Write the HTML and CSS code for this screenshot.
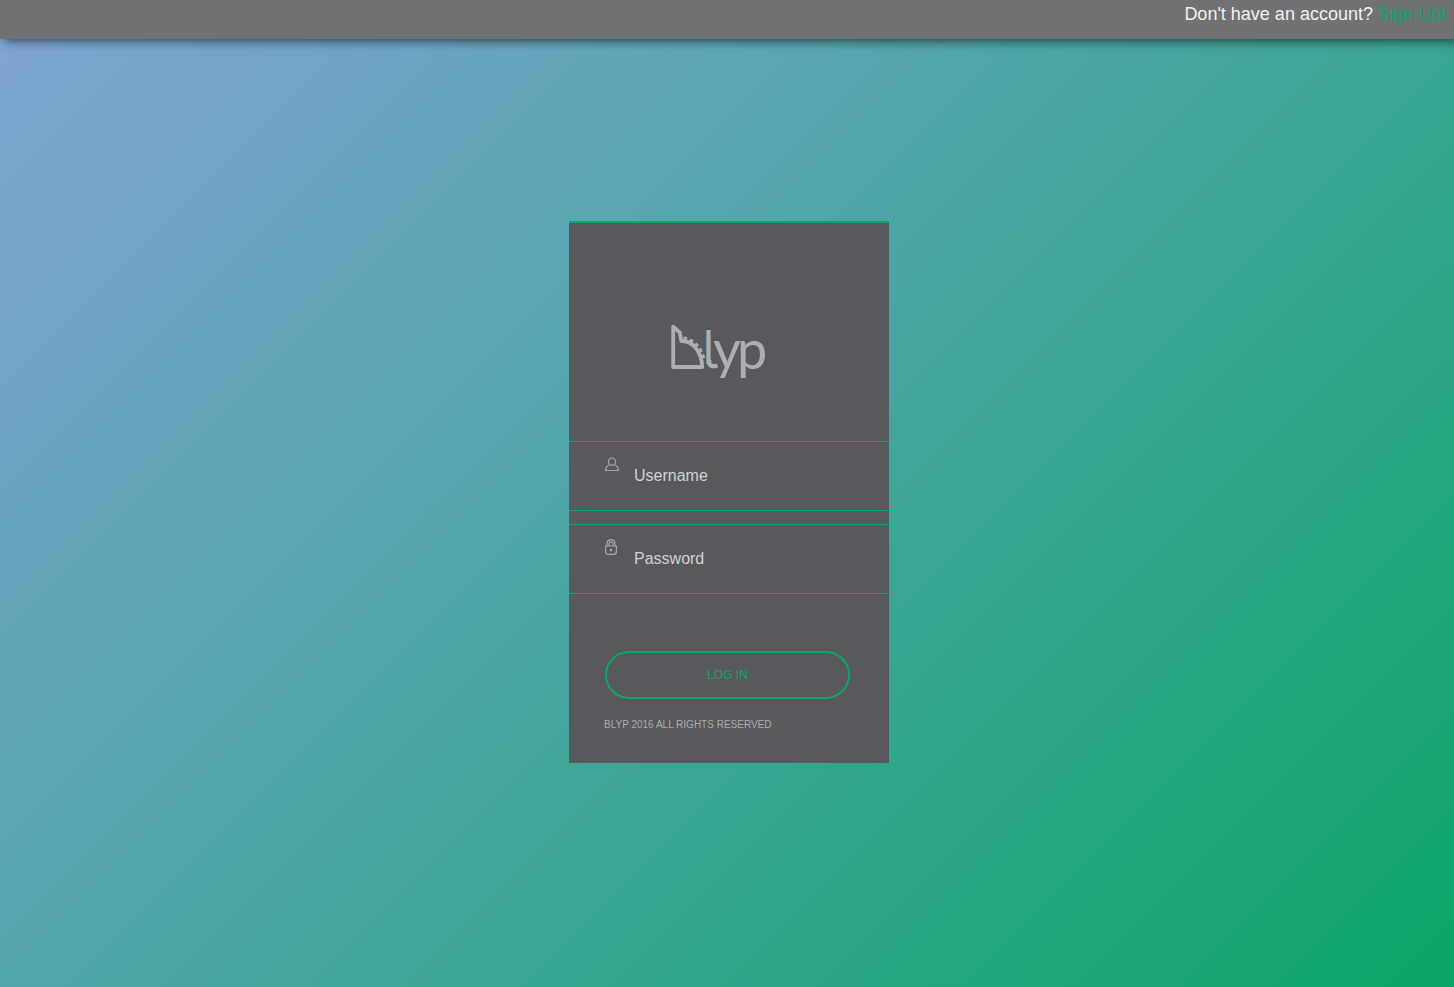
FILE: index.html
```
<!DOCTYPE html>
<html lang="en">
<head>
<meta charset="utf-8">
<title>Blyp</title>
<link rel="stylesheet" href="styles.css">
</head>
<body>
<header class="topbar">Don't have an account? <a class="signup" href="#">Sign Up!</a></header>
<main class="stage">
  <form class="card">
    <svg class="logo" viewBox="0 -10 110 80" role="img" aria-label="blyp">
      <path class="logo-line" d="M5.2 4.8V45H34.2C34 31 25.5 18.5 13.3 19L11.8 10.5Z"/>
      <path class="logo-scales" d="M15.6 15.8C26 18 34.5 27 36 38.5"/>
      <text class="logo-text"><tspan class="logo-l" x="35" y="42">l</tspan><tspan x="45" y="47">y</tspan><tspan x="69" y="47">p</tspan></text>
      <path class="logo-tail" d="M41.2 38V40C41.2 43.8 44.2 45.2 49.4 43.4"/>
    </svg>
    <div class="field">
      <svg class="icon" viewBox="0 0 14 16" aria-hidden="true"><circle cx="7" cy="5.6" r="3.6"/><path d="M4.7 8.7C2 9.6.7 11.5.6 14.5H13.4C13.3 11.5 12 9.6 9.3 8.7"/></svg>
      <input class="input" type="text" placeholder="Username" aria-label="Username">
    </div>
    <div class="field">
      <svg class="icon" viewBox="0 0 14 16" aria-hidden="true"><path d="M2 7V5C2 2.2 3.6.6 6 .6S10 2.2 10 5V7M4 7V5C4 3.4 4.8 2.6 6 2.6S8 3.4 8 5V7M.6 7H11.4V12.5Q11.4 15.4 8.5 15.4H3.5Q.6 15.4.6 12.5Z"/><path class="keyhole" d="M6 9.8V12.2"/></svg>
      <input class="input" type="password" placeholder="Password" aria-label="Password">
    </div>
    <button class="login" type="button">LOG IN</button>
    <p class="legal">BLYP 2016 ALL RIGHTS RESERVED</p>
  </form>
</main>
</body>
</html>
```
FILE: styles.css
```
* { box-sizing: border-box; }
body {
  margin: 0;
  min-height: 100vh;
  display: flex;
  flex-direction: column;
  font-family: "Liberation Sans", Arial, sans-serif;
  background: linear-gradient(135deg, #82a5d6, #0ca668);
}
.topbar {
  min-height: 39px;
  padding: 4px 7px;
  background: #717274;
  box-shadow: 4px 2px 10px rgba(0, 0, 0, .6);
  color: #f1f1f2;
  font-size: 18px;
  line-height: 20px;
  text-align: right;
}
.signup { color: #0ca668; text-decoration: none; }
.stage {
  display: flex;
  justify-content: center;
  padding: 182px 0 40px 4px;
}
.card {
  display: flex;
  flex-direction: column;
  width: 320px;
  padding-bottom: 32px;
  border-top: 2px solid #0ca668;
  background: #58595c;
}
.logo {
  width: 110px;
  height: 80px;
  margin: 89px 0 49px 99px;
  overflow: visible;
}
.logo-line { fill: none; stroke: #acaeaf; stroke-width: 3.8; stroke-linejoin: round; }
.logo-scales { fill: none; stroke: #acaeaf; stroke-width: 3.2; stroke-dasharray: 3.6 3; }
.logo-text { fill: #acaeaf; font-family: Lato, sans-serif; font-size: 54px; }
.logo-l { font-size: 46px; }
.logo-tail { fill: none; stroke: #acaeaf; stroke-width: 4.2; }
.field {
  display: flex;
  gap: 15px;
  height: 70px;
  padding: 14px 36px;
  border: solid #0ca668;
  border-width: 1px 0;
}
.field + .field { margin-top: 13px; }
.icon { width: 14px; height: 16px; fill: none; stroke: #a8a9ac; stroke-width: 1.2; }
.keyhole { stroke-width: 2; }
.input {
  flex: 1;
  min-width: 0;
  padding: 0;
  border: 0;
  outline: 0;
  background: none;
  color: #d1d2d4;
  font: 16px "Liberation Sans", Arial, sans-serif;
}
.input::placeholder { color: #d1d2d4; opacity: 1; }
.login {
  height: 48px;
  margin: 57px 39px 0 36px;
  border: 2px solid #0ca668;
  border-radius: 25px;
  background: none;
  color: #0ca668;
  font: 12px "Liberation Sans", Arial, sans-serif;
}
.legal {
  margin: 19px 35px 0;
  color: #acaeaf;
  font-size: 10px;
  line-height: 13px;
}
```
